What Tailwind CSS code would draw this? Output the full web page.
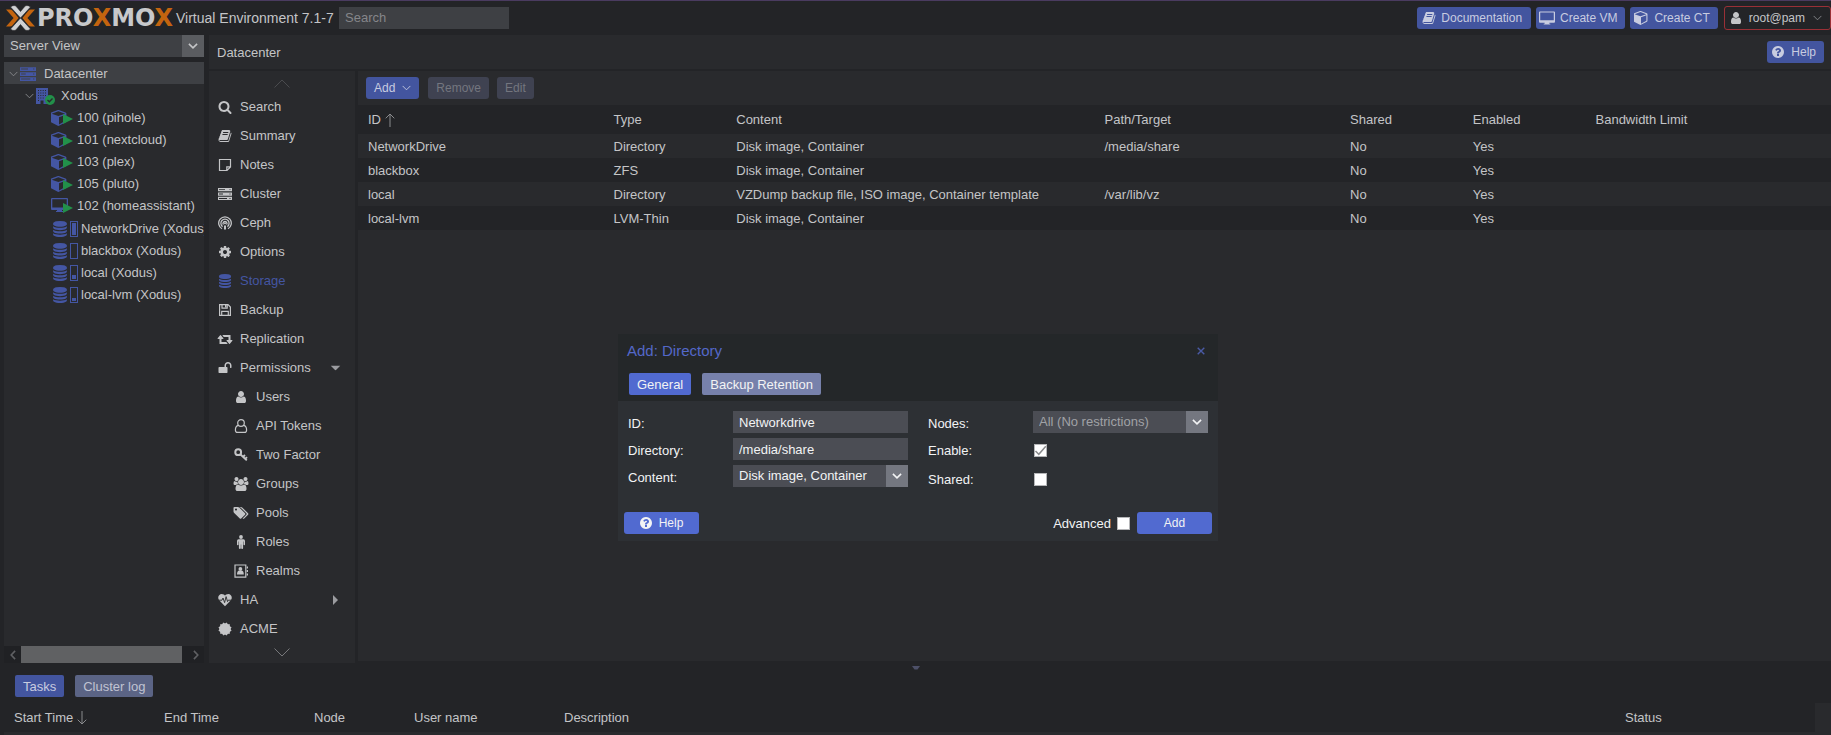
<!DOCTYPE html>
<html lang="en">
<head>
    <meta charset="UTF-8">
    <meta name="viewport" content="width=device-width, initial-scale=1.0">
    <title>Proxmox Virtual Environment</title>
    <script src="https://cdn.jsdelivr.net/npm/@tailwindcss/browser@4"></script>
    <style>
        body {
            font-family: 'Liberation Sans', Arial, sans-serif;
        }
    </style>
</head>
<body class="h-screen overflow-hidden bg-[#232427] text-[13px] leading-[18px] text-[#c4c5c7]">

    <!-- Icon sprite -->
    <svg class="hidden" aria-hidden="true">
        <symbol id="i-search" viewBox="0 0 1792 1792"><path d="M1216 832q0-185-131.500-316.500t-316.500-131.500-316.500 131.500-131.500 316.500 131.500 316.500 316.500 131.500 316.500-131.500 131.500-316.500zm512 832q0 52-38 90t-90 38q-54 0-90-38l-343-342q-179 124-399 124-143 0-273.500-55.500t-225-150-150-225-55.500-273.500 55.500-273.500 150-225 225-150 273.500-55.500 273.500 55.500 225 150 150 225 55.500 273.500q0 220-124 399l343 343q37 37 37 90z"/></symbol>
        <symbol id="i-book" viewBox="0 0 1792 1792"><path d="M1703 478q40 57 18 129l-275 906q-19 64-76.500 107.500t-122.500 43.500h-923q-77 0-148.500-53.500t-99.500-131.500q-24-67-2-127 0-4 3-27t4-37q1-8-3-21.500t-3-19.500q2-11 8-21t16.500-23.500 16.500-23.500q23-38 45-91.500t30-91.500q3-10 .5-30t-.5-28q3-11 17-28t17-23q21-36 42-92t25-90q1-9-2.500-32t.5-28q4-13 22-30.500t22-22.500q19-26 42.500-84.500t27.500-96.500q1-8-3-25.500t-2-26.500q2-8 9-18t18-23 17-21q8-12 16.500-30.500t15-35 16-36 19.500-32 26.500-23.500 36-11.500 47.500 5.500l-1 3q38-9 51-9h761q74 0 114 56t18 130l-274 906q-36 119-71.500 153.500t-128.500 34.500h-869q-27 0-38 15-11 16-1 43 24 70 144 70h923q29 0 56-15.500t35-41.500l300-987q7-22 5-57 38 15 59 43zm-1064 2q-4 13 2 22.500t20 9.500h608q13 0 25.500-9.500t16.500-22.500l21-64q4-13-2-22.500t-20-9.500h-608q-13 0-25.500 9.500t-16.500 22.500zm-83 256q-4 13 2 22.500t20 9.500h608q13 0 25.500-9.500t16.500-22.500l21-64q4-13-2-22.500t-20-9.500h-608q-13 0-25.500 9.500t-16.500 22.500z"/></symbol>
        <symbol id="i-note" viewBox="0 0 14 14"><path d="M1.500 1.500h11v7.500l-3.500 3.500h-7.500z M12.500 8.800h-3.700v3.700" fill="none" stroke="currentColor" stroke-width="1.200"/></symbol>
        <symbol id="i-server" viewBox="0 0 14 14"><path fill-rule="evenodd" d="M0 1h14v3.300h-14z M1 2.200v.9h6v-.9z M11.500 2.200v.9h1v-.9z M0 5.400h14v3.300h-14z M1 6.600v.9h4v-.9z M11.500 6.600v.9h1v-.9z M0 9.800h14v3.300h-14z M1 11v.9h8v-.9z M11.500 11v.9h1v-.9z"/></symbol>
        <symbol id="i-ceph" viewBox="0 0 14 14"><g fill="none" stroke="currentColor" stroke-width="1.300"><path d="M4 12.700a6.300 6.300 0 1 1 6 0"/><path d="M4.600 10.600a4.100 4.100 0 1 1 4.800 0"/><path d="M5.400 8.600a2 2 0 1 1 3.200 0"/></g><circle cx="7" cy="7.200" r="1"/><path d="M6 9.400h2v4h-2z"/></symbol>
        <symbol id="i-cog" viewBox="0 0 1792 1792"><path d="M1152 896q0-106-75-181t-181-75-181 75-75 181 75 181 181 75 181-75 75-181zm512-109v222q0 12-8 23t-20 13l-185 28q-19 54-39 91 35 50 107 138 10 12 10 25t-9 23q-27 37-99 108t-94 71q-12 0-26-9l-138-108q-44 23-91 38-16 136-29 186-7 28-36 28h-222q-14 0-24.500-8.500t-11.500-21.500l-28-184q-49-16-90-37l-141 107q-10 9-25 9-14 0-25-11-126-114-165-168-7-10-7-23 0-12 8-23 15-21 51-66.500t54-70.500q-27-50-41-99l-183-27q-13-2-21-12.500t-8-23.500v-222q0-12 8-23t19-13l186-28q14-46 39-92-40-57-107-138-10-12-10-24 0-10 9-23 26-36 98.500-107.500t94.500-71.500q13 0 26 10l138 107q44-23 91-38 16-136 29-186 7-28 36-28h222q14 0 24.500 8.500t11.500 21.500l28 184q49 16 90 37l142-107q9-9 24-9 13 0 25 10 129 119 165 170 7 8 7 22 0 12-8 23-15 21-51 66.500t-54 70.500q26 50 41 98l183 28q13 2 21 12.500t8 23.500z"/></symbol>
        <symbol id="i-database" viewBox="128 0 1536 1792"><path d="M896 768q237 0 443-43t325-127v170q0 69-103 128t-280 93.500-385 34.500-385-34.500-280-93.500-103-128v-170q119 84 325 127t443 43zm0 768q237 0 443-43t325-127v170q0 69-103 128t-280 93.500-385 34.500-385-34.500-280-93.500-103-128v-170q119 84 325 127t443 43zm0-384q237 0 443-43t325-127v170q0 69-103 128t-280 93.500-385 34.500-385-34.500-280-93.500-103-128v-170q119 84 325 127t443 43zm0-1152q208 0 385 34.500t280 93.500 103 128v128q0 69-103 128t-280 93.500-385 34.500-385-34.500-280-93.500-103-128v-128q0-69 103-128t280-93.500 385-34.500z"/></symbol>
        <symbol id="i-floppy" viewBox="0 0 14 14"><path d="M1.600 1.600h8.400l2.400 2.400v8.400h-10.800z M4 1.600v3.600h5.200v-3.600 M3.700 12.400v-4h6.600v4" fill="none" stroke="currentColor" stroke-width="1.200"/><path d="M7 2h1.500v2.500h-1.500z"/></symbol>
        <symbol id="i-retweet" viewBox="0 0 1920 1792"><path d="M1280 1504q0 13-9.500 22.500t-22.500 9.500h-960q-8 0-13.500-2t-9-7-5.500-8-3-11.500-1-11.500v-600h-192q-26 0-45-19t-19-45q0-24 15-41l320-384q19-22 49-22t49 22l320 384q15 17 15 41 0 26-19 45t-45 19h-192v384h576q16 0 25 11l160 192q7 10 7 21zm640-416q0 24-15 41l-320 384q-20 23-49 23t-49-23l-320-384q-15-17-15-41 0-26 19-45t45-19h192v-384h-576q-16 0-25-12l-160-192q-7-9-7-20 0-13 9.500-22.500t22.500-9.500h960q8 0 13.500 2t9 7 5.500 8 3 11.500 1 11.500v600h192q26 0 45 19t19 45z"/></symbol>
        <symbol id="i-unlock" viewBox="0 0 1792 1792"><path d="M1728 576v256q0 26-19 45t-45 19h-64q-26 0-45-19t-19-45v-256q0-106-75-181t-181-75-181 75-75 181v192h96q40 0 68 28t28 68v576q0 40-28 68t-68 28h-960q-40 0-68-28t-28-68v-576q0-40 28-68t68-28h672v-192q0-185 131.500-316.500t316.500-131.500 316.500 131.500 131.500 316.500z"/></symbol>
        <symbol id="i-user" viewBox="0 0 1792 1792"><path d="M1536 1399q0 109-62.500 187t-150.500 78h-854q-88 0-150.500-78t-62.500-187q0-85 8.500-160.500t31.500-152 58.500-131 94-89 134.500-34.500q131 128 313 128t313-128q76 0 134.500 34.500t94 89 58.500 131 31.500 152 8.500 160.500zm-256-887q0 159-112.500 271.500t-271.500 112.500-271.500-112.500-112.500-271.500 112.500-271.500 271.500-112.500 271.500 112.500 112.500 271.500z"/></symbol>
        <symbol id="i-user-o" viewBox="0 0 14 14"><g fill="none" stroke="currentColor" stroke-width="1.200"><circle cx="7" cy="4" r="3.300"/><path d="M4.300 6.300c-1.800.4-2.900 2.300-2.900 4.600 0 1.500.9 2.500 2.100 2.500h7c1.200 0 2.100-1 2.100-2.500 0-2.300-1.100-4.200-2.900-4.600"/></g></symbol>
        <symbol id="i-key" viewBox="0 0 14 14"><circle cx="4.200" cy="4.200" r="2.900" fill="none" stroke="currentColor" stroke-width="2"/><path d="M6 6l6.800 6.400 M9 9l2-2 M11 11.200l2-2" fill="none" stroke="currentColor" stroke-width="1.900"/></symbol>
        <symbol id="i-users" viewBox="-64 0 1920 1792"><path d="M529 896q-162 5-265 128h-134q-82 0-138-40.500t-56-118.500q0-353 124-353 6 0 43.500 21t97.500 42.500 119 21.500q67 0 133-23-5 37-5 66 0 139 81 256zm1071 637q0 120-73 189.500t-194 69.500h-874q-121 0-194-69.500t-73-189.500q0-53 3.500-103.500t14-109 26.500-108.500 43-97.500 62-81 85.500-53.500 111.500-20q10 0 43 21.500t73 48 107 48 135 21.500 135-21.500 107-48 73-48 43-21.500q61 0 111.500 20t85.500 53.500 62 81 43 97.500 26.500 108.500 14 109 3.500 103.500zm-1024-1277q0 106-75 181t-181 75-181-75-75-181 75-181 181-75 181 75 75 181zm704 384q0 159-112.500 271.500t-271.500 112.500-271.500-112.500-112.500-271.500 112.500-271.500 271.500-112.500 271.500 112.500 112.500 271.500zm576 225q0 78-56 118.500t-138 40.500h-134q-103-123-265-128 81-117 81-256 0-29-5-66 66 23 133 23 59 0 119-21.500t97.500-42.500 43.500-21q124 0 124 353zm-128-609q0 106-75 181t-181 75-181-75-75-181 75-181 181-75 181 75 75 181z"/></symbol>
        <symbol id="i-tags" viewBox="0 0 1920 1792"><path d="M448 448q0-53-37.500-90.500t-90.500-37.500-90.500 37.500-37.500 90.500 37.500 90.500 90.500 37.500 90.500-37.500 37.500-90.500zm1067 576q0 53-37 90l-491 492q-39 37-91 37-53 0-90-37l-715-716q-38-37-64.500-101t-26.500-117v-416q0-52 38-90t90-38h416q53 0 117 26.500t102 64.500l715 714q37 39 37 91zm384 0q0 53-37 90l-491 492q-39 37-91 37-36 0-59-14t-53-45l470-470q37-37 37-90 0-52-37-91l-715-714q-38-38-102-64.500t-117-26.500h224q53 0 117 26.500t102 64.500l715 714q37 39 37 91z"/></symbol>
        <symbol id="i-male" viewBox="0 0 14 14"><circle cx="7" cy="2" r="1.900"/><path d="M4.600 4.300h4.800q1.600 0 1.600 1.600v3.600q0 .8-.7.800t-.8-.8v-3h-.4v6.500q0 1-1 1t-.9-1v-3.600h-.4v3.600q0 1-.9 1t-1-1v-6.500h-.4v3q0 .8-.8.8t-.7-.8v-3.600q0-1.600 1.600-1.600z"/></symbol>
        <symbol id="i-address" viewBox="0 0 14 14"><path d="M1 1h10.800v12.200h-10.800z" fill="none" stroke="currentColor" stroke-width="1.200"/><circle cx="6.400" cy="5" r="1.900"/><path d="M3 10.600q0-3.800 2-4.200 1.400 1 2.800 0 2 .4 2 4.200z M12.700 2.600h1.300v2h-1.300z M12.700 6h1.300v2h-1.300z M12.700 9.400h1.300v2h-1.300z"/></symbol>
        <symbol id="i-heartbeat" viewBox="0 0 14 14"><path d="M7 13.200l-5.600-5.600c-3-3.200.2-8.300 4.400-6 .5.300 1 .8 1.200 1.200.2-.4.700-.9 1.200-1.200 4.200-2.300 7.400 2.800 4.400 6z"/><path d="M0 7.200h4l1-2.200 1.600 4.600 1.500-6 1.400 5 .7-1.400h3.800" fill="none" stroke="#292a2d" stroke-width=".9"/></symbol>
        <symbol id="i-certificate" viewBox="0 0 14 14"><rect x="2.200" y="2.200" width="9.600" height="9.600"/><rect x="2.200" y="2.200" width="9.600" height="9.600" transform="rotate(30 7 7)"/><rect x="2.200" y="2.200" width="9.600" height="9.600" transform="rotate(60 7 7)"/></symbol>
        <symbol id="i-cube" viewBox="128 128 1536 1664"><path d="M896 1629l640-349v-636l-640 233v752zm-64-865l698-254-698-254-698 254zm832-252v768q0 35-18 65t-49 47l-704 384q-28 16-61 16t-61-16l-704-384q-31-17-49-47t-18-65v-768q0-40 23-73t61-47l704-256q22-8 44-8t44 8l704 256q38 14 61 47t23 73z"/></symbol>
        <symbol id="i-desktop" viewBox="0 0 17 14"><path fill-rule="evenodd" d="M1 0h15q1 0 1 1v10q0 1-1 1h-5v1h1v1h-7v-1h1v-1h-5q-1 0-1-1v-10q0-1 1-1z M1.300 1.200v8.300h14.400v-8.300z"/></symbol>
        <symbol id="i-building" viewBox="0 0 14 16"><path fill-rule="evenodd" d="M1 0h12v16h-12z M3 2v1h1v-1z M5.300 2v1h1v-1z M7.700 2v1h1v-1z M10 2v1h1v-1z M3 4.500v1h1v-1z M5.300 4.500v1h1v-1z M7.700 4.500v1h1v-1z M10 4.500v1h1v-1z M3 7v1h1v-1z M5.300 7v1h1v-1z M7.700 7v1h1v-1z M10 7v1h1v-1z M3 9.500v1h1v-1z M5.300 9.500v1h1v-1z M7.700 9.500v1h1v-1z M3 12v1h1v-1z M5.500 12.500v3.500h3v-3.500z"/></symbol>
        <symbol id="i-help" viewBox="128 128 1536 1536"><path d="M1024 1376v-192q0-14-9-23t-23-9h-192q-14 0-23 9t-9 23v192q0 14 9 23t23 9h192q14 0 23-9t9-23zm256-672q0-88-55.500-163t-138.500-116-170-41q-243 0-371 213-15 24 8 42l132 100q7 6 19 6 16 0 25-12 53-68 86-92 34-24 86-24 48 0 85.500 26t37.500 59q0 38-20 61t-68 45q-63 28-115.500 86.500t-52.500 125.500v36q0 14 9 23t23 9h192q14 0 23-9t9-23q0-19 21.500-49.500t54.500-49.500q32-18 49-28.500t46-35 44.500-48 28-60.500 12.500-81zm384 192q0 209-103 385.500t-279.500 279.500-385.500 103-385.500-103-279.500-279.500-103-385.500 103-385.500 279.500-279.500 385.500-103 385.500 103 279.500 279.500 103 385.500z"/></symbol>
        <symbol id="i-chevron" viewBox="0 0 10 6"><path d="M.7.700l4.300 4.300 4.300-4.300" fill="none" stroke="currentColor" stroke-width="1"/></symbol>
        <symbol id="i-chevron-bold" viewBox="0 0 10 6"><path d="M.9.900l4.100 3.900 4.100-3.900" fill="none" stroke="currentColor" stroke-width="1.600"/></symbol>
        <symbol id="i-scroll" viewBox="0 0 16 9"><path d="M.5.500l7.500 7.500 7.500-7.500" fill="none" stroke="currentColor" stroke-width="1"/></symbol>
        <symbol id="i-arrow" viewBox="0 0 10 14"><path d="M5 14v-13 M.7 5.300l4.300-4.300 4.300 4.300" fill="none" stroke="currentColor" stroke-width="1"/></symbol>
        <symbol id="i-play" viewBox="0 0 10 10"><path d="M0 0l10 5-10 5z"/></symbol>
        <symbol id="i-caret" viewBox="0 0 5 10"><path d="M0 0l5 5-5 5z"/></symbol>
    </svg>

    <div class="flex h-full flex-col">

        <!-- Top bar -->
        <header class="flex h-[35px] shrink-0 items-center border-t border-[#4a3b60] pb-[5px] pt-1">
            <svg class="ml-[6px] h-[26px] w-[29px] shrink-0" viewBox="0 0 29 26" aria-label="Proxmox logo">
                <path fill="#c4640f" d="M0 4.500h4q1.500 0 2.600 1.300l6 7.200-6 7.200q-1.100 1.300-2.600 1.300h-4l7.600-8.500z M29 4.500h-4q-1.500 0-2.600 1.300l-6 7.200 6 7.200q1.100 1.300 2.600 1.300h4l-7.600-8.500z"/>
                <path fill="#d0d1d3" stroke="#232427" stroke-width=".6" d="M4.500 2q1.500-1.500 3.500-1.500 1.500 0 2.500 1.200l4 4.800 4-4.800q1-1.200 2.500-1.200 2 0 3.500 1.500l-10 11z M4.500 24q1.500 1.500 3.500 1.500 1.500 0 2.500-1.200l4-4.800 4 4.800q1 1.200 2.500 1.200 2 0 3.500-1.500l-10-11z"/>
            </svg>
            <span class="ml-[2px] w-[138px] shrink-0 font-['DejaVu_Sans'] text-[24px] font-bold leading-[26px] text-[#c8c9cb]">PRO<span class="text-[#c4640f]">X</span>MO<span class="text-[#c4640f]">X</span></span>
            <span class="ml-[1px] w-[163px] shrink-0 whitespace-nowrap text-[14px]">Virtual Environment 7.1-7</span>
            <input type="text" aria-label="Search" placeholder="Search" class="h-[22px] w-[170px] bg-[#3e4044] px-[6px] outline-none placeholder:text-[#85868a]">

            <div class="ml-auto flex items-center text-[12px]">
                <button class="mr-[5px] flex h-[22px] items-center gap-[5px] rounded-[3px] bg-[#43559f] pl-[5px] pr-[9px] text-[#c8cce0]">
                    <svg class="size-[14px] fill-current"><use href="#i-book"/></svg>Documentation
                </button>
                <button class="mr-[5px] flex h-[22px] items-center gap-[5px] rounded-[3px] bg-[#43559f] pl-[3px] pr-2 text-[#c8cce0]">
                    <svg class="h-[14px] w-4 fill-current"><use href="#i-desktop"/></svg>Create VM
                </button>
                <button class="mr-[6px] flex h-[22px] items-center gap-[6px] rounded-[3px] bg-[#43559f] pl-1 pr-2 text-[#c8cce0]">
                    <svg class="size-[14px] fill-current"><use href="#i-cube"/></svg>Create CT
                </button>
                <button class="flex h-6 items-center gap-[6px] rounded-[3px] border border-[#9a3036] pl-1 pr-2">
                    <svg class="size-[14px] fill-current"><use href="#i-user"/></svg>root@pam
                    <svg class="ml-[2px] h-[6px] w-[9px] text-[#8a8b8e]"><use href="#i-chevron"/></svg>
                </button>
            </div>
        </header>

        <div class="flex min-h-0 flex-1">

            <!-- Resource tree -->
            <aside class="ml-1 mr-[5px] flex w-[200px] shrink-0 flex-col">
                <div class="relative mb-[5px]">
                    <select aria-label="View" class="block h-[22px] w-full appearance-none bg-[#3e4044] pl-[6px] outline-none">
                        <option>Server View</option>
                    </select>
                    <span class="pointer-events-none absolute inset-y-0 right-0 flex w-[22px] items-center justify-center bg-[#5a5c60]">
                        <svg class="h-[6px] w-[10px]"><use href="#i-chevron-bold"/></svg>
                    </span>
                </div>
                <ul class="flex-1 overflow-hidden whitespace-nowrap bg-[#292a2d] [&>li]:pt-[2px]">
                    <li class="flex h-[22px] items-center bg-[#3e4044] pl-[5px]">
                        <svg class="h-[6px] w-[9px] text-[#8a8b8e]"><use href="#i-chevron"/></svg>
                        <svg class="ml-[2px] mr-2 size-4 fill-[#4456a3]"><use href="#i-server"/></svg>Datacenter
                    </li>
                    <li class="flex h-[22px] items-center pl-[21px]">
                        <svg class="h-[6px] w-[9px] text-[#8a8b8e]"><use href="#i-chevron"/></svg>
                        <span class="relative ml-[1px] mr-[12px] h-4 w-[14px]">
                            <svg class="h-4 w-[14px] fill-[#4456a3]"><use href="#i-building"/></svg>
                            <svg class="absolute -bottom-[1px] left-[10px] size-[10px]" viewBox="0 0 12 12"><circle cx="6" cy="6" r="6" fill="#22904a"/><path d="M3 6l2.200 2.200 3.800-4" fill="none" stroke="#292a2d" stroke-width="1.600"/></svg>
                        </span>Xodus
                    </li>
                    <li class="flex h-[22px] items-center pl-[47px]">
                        <span class="relative mr-[10px] size-4"><svg class="size-4 fill-[#4456a3]"><use href="#i-cube"/></svg><svg class="absolute left-[12px] top-[4px] size-[10px] fill-[#22904a]"><use href="#i-play"/></svg></span>100 (pihole)
                    </li>
                    <li class="flex h-[22px] items-center pl-[47px]">
                        <span class="relative mr-[10px] size-4"><svg class="size-4 fill-[#4456a3]"><use href="#i-cube"/></svg><svg class="absolute left-[12px] top-[4px] size-[10px] fill-[#22904a]"><use href="#i-play"/></svg></span>101 (nextcloud)
                    </li>
                    <li class="flex h-[22px] items-center pl-[47px]">
                        <span class="relative mr-[10px] size-4"><svg class="size-4 fill-[#4456a3]"><use href="#i-cube"/></svg><svg class="absolute left-[12px] top-[4px] size-[10px] fill-[#22904a]"><use href="#i-play"/></svg></span>103 (plex)
                    </li>
                    <li class="flex h-[22px] items-center pl-[47px]">
                        <span class="relative mr-[10px] size-4"><svg class="size-4 fill-[#4456a3]"><use href="#i-cube"/></svg><svg class="absolute left-[12px] top-[4px] size-[10px] fill-[#22904a]"><use href="#i-play"/></svg></span>105 (pluto)
                    </li>
                    <li class="flex h-[22px] items-center pl-[47px]">
                        <span class="relative mr-[10px] size-4"><svg class="h-[14px] w-[17px] fill-[#4456a3]"><use href="#i-desktop"/></svg><svg class="absolute left-[12px] top-[5px] size-[10px] fill-[#22904a]"><use href="#i-play"/></svg></span>102 (homeassistant)
                    </li>
                    <li class="mt-px flex h-[22px] items-center pl-[49px]">
                        <svg class="h-4 w-[14px] shrink-0 fill-[#4456a3]"><use href="#i-database"/></svg>
                        <span class="ml-[3px] mr-[3px] flex h-4 w-2 shrink-0 items-end border border-[#4456a3] p-px"><span class="w-full bg-[#4456a3]" style="height: 100%"></span></span>NetworkDrive (Xodus)
                    </li>
                    <li class="flex h-[22px] items-center pl-[49px]">
                        <svg class="h-4 w-[14px] fill-[#4456a3]"><use href="#i-database"/></svg>
                        <span class="ml-[3px] mr-[3px] flex h-4 w-2 items-end border border-[#4456a3] p-px"><span class="w-full bg-[#4456a3]" style="height: 0%"></span></span>blackbox (Xodus)
                    </li>
                    <li class="flex h-[22px] items-center pl-[49px]">
                        <svg class="h-4 w-[14px] fill-[#4456a3]"><use href="#i-database"/></svg>
                        <span class="ml-[3px] mr-[3px] flex h-4 w-2 items-end border border-[#4456a3] p-px"><span class="w-full bg-[#4456a3]" style="height: 34%"></span></span>local (Xodus)
                    </li>
                    <li class="flex h-[22px] items-center pl-[49px]">
                        <svg class="h-4 w-[14px] fill-[#4456a3]"><use href="#i-database"/></svg>
                        <span class="ml-[3px] mr-[3px] flex h-4 w-2 items-end border border-[#4456a3] p-px"><span class="w-full bg-[#4456a3]" style="height: 25%"></span></span>local-lvm (Xodus)
                    </li>
                </ul>
                <!-- Horizontal scrollbar -->
                <div class="flex h-[17px] items-center bg-[#202124] text-[#5f6063]">
                    <span class="flex w-[17px] justify-center"><svg class="h-[6px] w-[10px] rotate-90"><use href="#i-chevron-bold"/></svg></span>
                    <span class="h-full w-[161px] bg-[#606163]"></span>
                    <span class="flex flex-1 justify-end pr-[3px]"><svg class="h-[6px] w-[10px] -rotate-90"><use href="#i-chevron-bold"/></svg></span>
                </div>
            </aside>

            <!-- Datacenter panel -->
            <main class="flex min-w-0 flex-1 flex-col">
                <div class="mb-[2px] flex h-[34px] shrink-0 items-center bg-[#292a2d] pl-2 pr-[7px]">
                    <h1 class="pt-[2px]">Datacenter</h1>
                    <button class="ml-auto flex h-[22px] items-center gap-[7px] rounded-[3px] bg-[#43559f] pl-[5px] pr-2 text-[12px] text-[#c8cce0]">
                        <svg class="size-3 fill-current"><use href="#i-help"/></svg>Help
                    </button>
                </div>
                <div class="flex min-h-0 flex-1">

                    <nav class="mr-[3px] flex w-[146px] shrink-0 flex-col bg-[#292a2d]">
                        <div class="flex h-[21px] items-center justify-center pt-[3px] text-[#4a4b4e]"><svg class="h-[9px] w-4 rotate-180"><use href="#i-scroll"/></svg></div>
                        <a href="#" class="flex h-[29px] items-center gap-2 pl-[9px]"><svg class="size-[14px] fill-current"><use href="#i-search"/></svg>Search</a>
                        <a href="#" class="flex h-[29px] items-center gap-2 pl-[9px]"><svg class="size-[14px] fill-current"><use href="#i-book"/></svg>Summary</a>
                        <a href="#" class="flex h-[29px] items-center gap-2 pl-[9px]"><svg class="size-[14px] fill-current"><use href="#i-note"/></svg>Notes</a>
                        <a href="#" class="flex h-[29px] items-center gap-2 pl-[9px]"><svg class="size-[14px] fill-current"><use href="#i-server"/></svg>Cluster</a>
                        <a href="#" class="flex h-[29px] items-center gap-2 pl-[9px]"><svg class="size-[14px] fill-current"><use href="#i-ceph"/></svg>Ceph</a>
                        <a href="#" class="flex h-[29px] items-center gap-2 pl-[9px]"><svg class="size-[14px] fill-current"><use href="#i-cog"/></svg>Options</a>
                        <a href="#" class="flex h-[29px] items-center gap-2 pl-[9px] text-[#4456a3]"><svg class="size-[14px] fill-current"><use href="#i-database"/></svg>Storage</a>
                        <a href="#" class="flex h-[29px] items-center gap-2 pl-[9px]"><svg class="size-[14px] fill-current"><use href="#i-floppy"/></svg>Backup</a>
                        <a href="#" class="flex h-[29px] items-center gap-[7px] pl-2"><svg class="h-[14px] w-4 fill-current"><use href="#i-retweet"/></svg>Replication</a>
                        <a href="#" class="flex h-[29px] items-center gap-2 pl-[9px]"><svg class="size-[14px] fill-current"><use href="#i-unlock"/></svg>Permissions
                            <svg class="ml-auto mr-[17px] h-[10px] w-[5px] rotate-90 fill-[#9b9ca0]"><use href="#i-caret"/></svg></a>
                        <a href="#" class="flex h-[29px] items-center gap-2 pl-[25px]"><svg class="size-[14px] fill-current"><use href="#i-user"/></svg>Users</a>
                        <a href="#" class="flex h-[29px] items-center gap-2 pl-[25px]"><svg class="size-[14px] fill-current"><use href="#i-user-o"/></svg>API Tokens</a>
                        <a href="#" class="flex h-[29px] items-center gap-2 pl-[25px]"><svg class="size-[14px] fill-current"><use href="#i-key"/></svg>Two Factor</a>
                        <a href="#" class="flex h-[29px] items-center gap-[7px] pl-6"><svg class="h-[14px] w-4 fill-current"><use href="#i-users"/></svg>Groups</a>
                        <a href="#" class="flex h-[29px] items-center gap-[7px] pl-6"><svg class="h-[14px] w-4 fill-current"><use href="#i-tags"/></svg>Pools</a>
                        <a href="#" class="flex h-[29px] items-center gap-2 pl-[25px]"><svg class="size-[14px] fill-current"><use href="#i-male"/></svg>Roles</a>
                        <a href="#" class="flex h-[29px] items-center gap-2 pl-[25px]"><svg class="size-[14px] fill-current"><use href="#i-address"/></svg>Realms</a>
                        <a href="#" class="flex h-[29px] items-center gap-2 pl-[9px]"><svg class="size-[14px] fill-current"><use href="#i-heartbeat"/></svg>HA
                            <svg class="ml-auto mr-[17px] h-[10px] w-[5px] fill-[#9b9ca0]"><use href="#i-caret"/></svg></a>
                        <a href="#" class="flex h-[29px] items-center gap-2 pl-[9px]"><svg class="size-[14px] fill-current"><use href="#i-certificate"/></svg>ACME</a>
                        <div class="flex flex-1 justify-center pt-[5px] text-[#77787b]"><svg class="h-[9px] w-4"><use href="#i-scroll"/></svg></div>
                    </nav>

                    <section class="mb-[2px] min-w-0 flex-1 bg-[#292a2d]">
                        <div class="flex h-[34px] items-center pb-px pl-2 text-[12px]">
                            <button class="mr-[9px] flex h-[22px] items-center gap-[7px] rounded-[3px] bg-[#43559f] px-2 text-[#c8cce0]">Add
                                <svg class="h-[6px] w-[9px]"><use href="#i-chevron"/></svg></button>
                            <button disabled class="mr-2 h-[22px] rounded-[3px] bg-[#3f4251] px-2 text-[#74767f]">Remove</button>
                            <button disabled class="h-[22px] rounded-[3px] bg-[#3f4251] px-2 text-[#74767f]">Edit</button>
                        </div>
                        <table class="w-full table-fixed text-left">
                            <thead>
                                <tr class="h-[29px] bg-[#232427] [&>th]:p-0 [&>th]:pl-[10px] [&>th]:font-normal">
                                    <th class="w-1/6"><span class="flex items-center gap-1">ID <svg class="h-[14px] w-[10px] text-[#8a8b8e]"><use href="#i-arrow"/></svg></span></th>
                                    <th class="w-1/12">Type</th>
                                    <th class="w-1/4">Content</th>
                                    <th class="w-1/6">Path/Target</th>
                                    <th class="w-1/12">Shared</th>
                                    <th class="w-1/12">Enabled</th>
                                    <th class="w-1/6">Bandwidth Limit</th>
                                </tr>
                            </thead>
                            <tbody class="[&_td]:pb-0 [&_td]:pl-[10px] [&_td]:pt-[2px]">
                                <tr class="h-6"><td>NetworkDrive</td><td>Directory</td><td>Disk image, Container</td><td>/media/share</td><td>No</td><td>Yes</td><td></td></tr>
                                <tr class="h-6 bg-[#232427]"><td>blackbox</td><td>ZFS</td><td>Disk image, Container</td><td></td><td>No</td><td>Yes</td><td></td></tr>
                                <tr class="h-6"><td>local</td><td>Directory</td><td>VZDump backup file, ISO image, Container template</td><td>/var/lib/vz</td><td>No</td><td>Yes</td><td></td></tr>
                                <tr class="h-6 bg-[#232427]"><td>local-lvm</td><td>LVM-Thin</td><td>Disk image, Container</td><td></td><td>No</td><td>Yes</td><td></td></tr>
                            </tbody>
                        </table>
                    </section>
                </div>
            </main>
        </div>

        <!-- Task log -->
        <footer class="flex h-[72px] shrink-0 flex-col">
            <div class="flex h-3 items-start justify-center pt-[3px]"><svg class="h-[4px] w-[8px] fill-[#4d5068]" viewBox="0 0 8 4"><path d="M0 0h8l-2.500 3.500h-3z"/></svg></div>
            <div class="flex gap-[11px] pl-[15px]">
                <button class="h-[22px] rounded-[2px] bg-[#43559f] px-2 pt-[2px] text-[#c8cce0]">Tasks</button>
                <button class="h-[22px] rounded-[2px] bg-[#5b6485] px-2 pt-[2px] text-[#c0c3d2]">Cluster log</button>
            </div>
            <table class="mt-[6px] w-full table-fixed text-left">
                <thead>
                    <tr class="h-[29px] [&>th]:p-0 [&>th]:font-normal">
                        <th class="w-[154px]"><span class="flex items-center gap-1 pl-[14px]">Start Time <svg class="h-[14px] w-[10px] rotate-180 text-[#8a8b8e]"><use href="#i-arrow"/></svg></span></th>
                        <th class="w-[150px]"><span class="pl-[10px]">End Time</span></th>
                        <th class="w-[100px]"><span class="pl-[10px]">Node</span></th>
                        <th class="w-[150px]"><span class="pl-[10px]">User name</span></th>
                        <th><span class="pl-[10px]">Description</span></th>
                        <th class="w-[200px]"><span class="pl-[10px]">Status</span></th>
                        <th class="w-4 bg-[#292a2d]"></th>
                    </tr>
                </thead>
            </table>
            <div class="ml-1 flex-1 bg-[#292a2d]"></div>
        </footer>
    </div>

    <!-- Add: Directory window -->
    <form class="absolute left-[618px] top-[334px] w-[600px] bg-[#2d3034] text-[#f2f3f4]">
        <div class="h-[67px] bg-[#242729] px-[9px] pt-2">
            <div class="flex items-center justify-between">
                <h2 class="text-[15px] text-[#5468c8]">Add: Directory</h2>
                <button type="button" aria-label="Close" class="flex size-4 items-center justify-center text-[#4a5aa5]">
                    <svg class="size-[8px]" viewBox="0 0 8 8"><path d="M.7.700l6.600 6.600m0-6.600l-6.600 6.600" fill="none" stroke="currentColor" stroke-width="1.400"/></svg>
                </button>
            </div>
            <div class="ml-[2px] mt-[13px] flex gap-[11px]">
                <button type="button" class="h-[22px] rounded-[2px] bg-[#516ad0] px-2 pt-[2px]">General</button>
                <button type="button" class="h-[22px] rounded-[2px] bg-[#7781ab] px-2 pt-[2px]">Backup Retention</button>
            </div>
        </div>

        <div class="flex gap-5 px-[10px] pb-[18px] pt-[10px]">
            <div class="flex flex-1 flex-col gap-[5px]">
                <div class="flex items-center">
                    <label for="storageId" class="w-[105px] pt-1">ID:</label>
                    <input id="storageId" type="text" value="Networkdrive" class="h-[22px] w-[175px] bg-[#4b4d54] px-[6px] outline-none">
                </div>
                <div class="flex items-center">
                    <label for="directory" class="w-[105px] pt-1">Directory:</label>
                    <input id="directory" type="text" value="/media/share" class="h-[22px] w-[175px] bg-[#4b4d54] px-[6px] outline-none">
                </div>
                <div class="flex items-center">
                    <label for="content" class="w-[105px] pt-1">Content:</label>
                    <div class="relative">
                        <select id="content" class="block h-[22px] w-[175px] appearance-none bg-[#4b4d54] pl-[6px] outline-none"><option>Disk image, Container</option></select>
                        <span class="pointer-events-none absolute inset-y-0 right-0 flex w-[22px] items-center justify-center bg-[#747780]"><svg class="h-[6px] w-[10px]"><use href="#i-chevron-bold"/></svg></span>
                    </div>
                </div>
            </div>
            <div class="flex flex-1 flex-col">
                <div class="flex items-center">
                    <label for="nodes" class="w-[105px] pt-1">Nodes:</label>
                    <div class="relative">
                        <select id="nodes" class="block h-[22px] w-[175px] appearance-none bg-[#4b4d54] pl-[6px] text-[#a0a2a6] outline-none"><option>All (No restrictions)</option></select>
                        <span class="pointer-events-none absolute inset-y-0 right-0 flex w-[22px] items-center justify-center bg-[#747780]"><svg class="h-[6px] w-[10px]"><use href="#i-chevron-bold"/></svg></span>
                    </div>
                </div>
                <div class="mt-[3px] flex h-[29px] items-center">
                    <label for="enable" class="w-[106px]">Enable:</label>
                    <span class="relative flex">
                        <input id="enable" type="checkbox" checked class="peer size-[13px] appearance-none border border-[#b5b6b8] bg-white">
                        <svg class="pointer-events-none absolute inset-0 hidden size-[13px] peer-checked:block" viewBox="0 0 13 13"><path d="M1.500 7l3.300 3.300 7-8" fill="none" stroke="#8a8b8d" stroke-width="1.500"/></svg>
                    </span>
                </div>
                <div class="flex h-[29px] items-center">
                    <label for="shared" class="w-[106px]">Shared:</label>
                    <input id="shared" type="checkbox" class="size-[13px] appearance-none border border-[#b5b6b8] bg-white">
                </div>
            </div>
        </div>

        <div class="flex items-center px-[6px] pb-[7px]">
            <button type="button" class="flex h-[22px] w-[75px] items-center justify-center gap-[7px] rounded-[3px] bg-[#516ad0] text-[12px]">
                <svg class="size-3 fill-current"><use href="#i-help"/></svg>Help
            </button>
            <label for="advanced" class="ml-auto mr-[6px] pt-[2px]">Advanced</label>
            <input id="advanced" type="checkbox" class="mr-[7px] size-[13px] appearance-none border border-[#b5b6b8] bg-white">
            <button type="submit" class="h-[22px] w-[75px] rounded-[3px] bg-[#516ad0] text-[12px]">Add</button>
        </div>
    </form>
</body>
</html>
